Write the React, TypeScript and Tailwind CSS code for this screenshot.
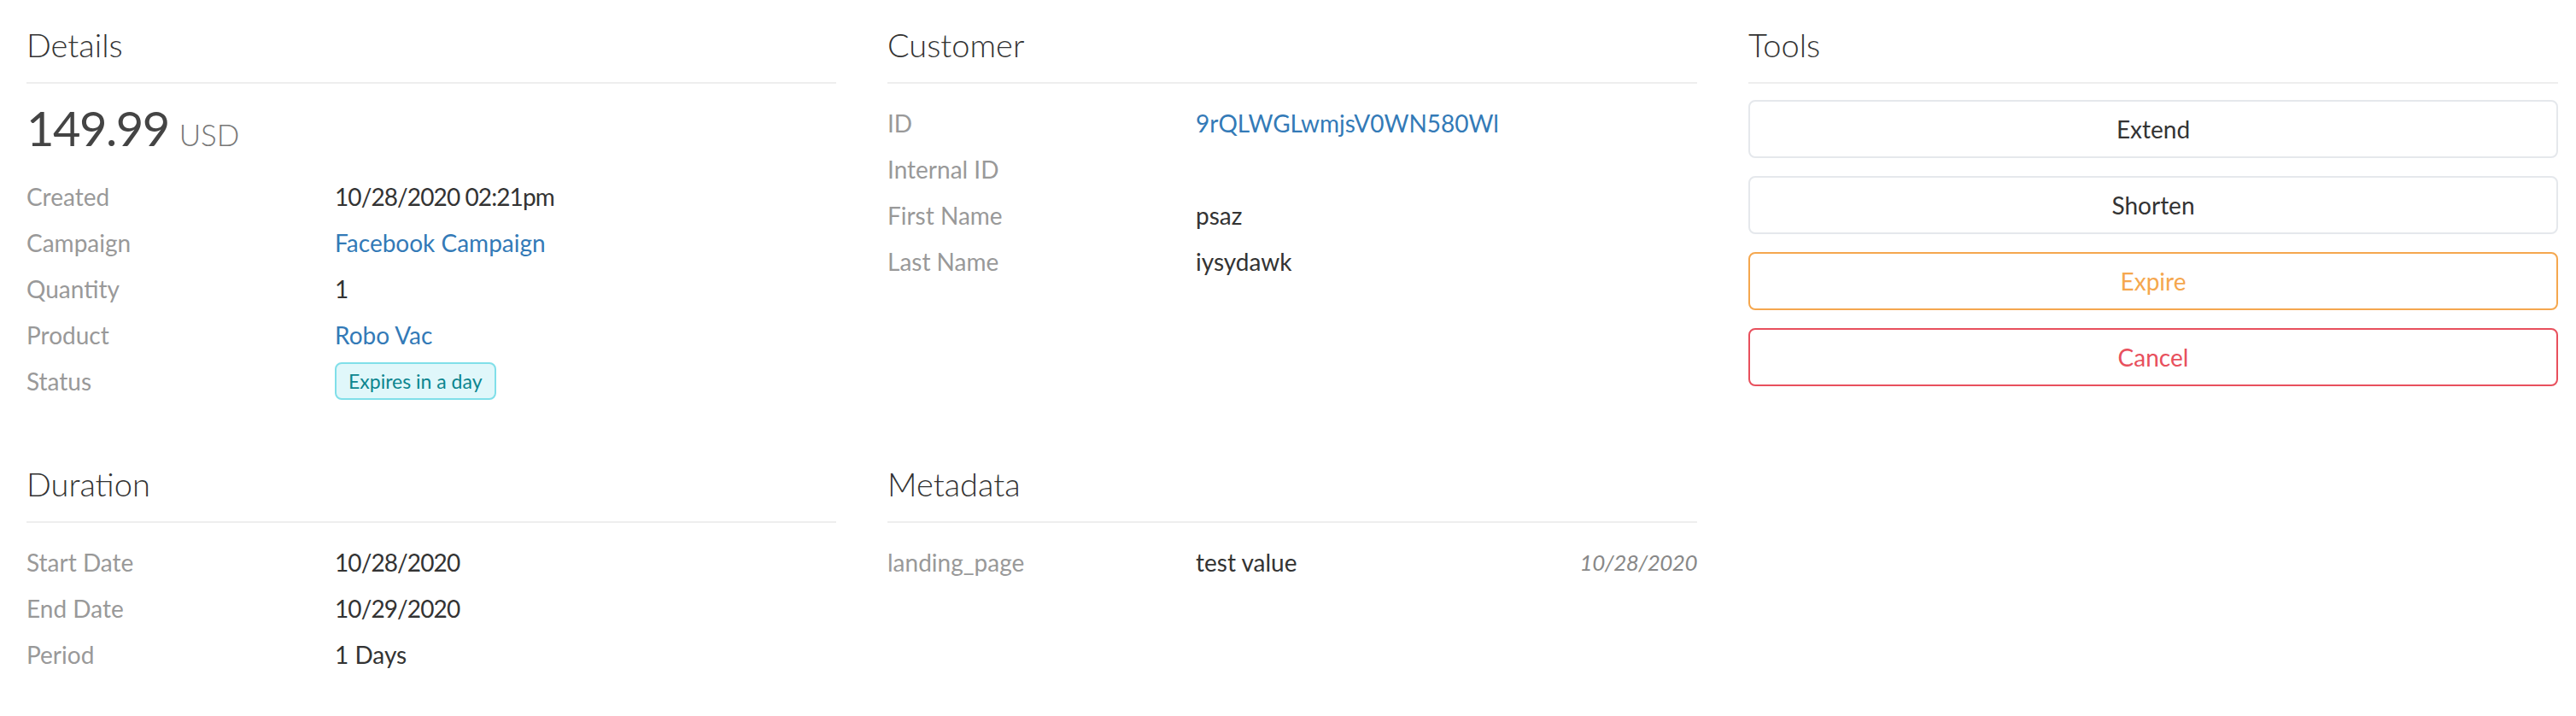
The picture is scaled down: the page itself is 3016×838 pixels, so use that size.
import React from "react";

const font = { fontFamily: "Lato, 'Noto Sans', sans-serif" };

function Heading({ children }: { children: React.ReactNode }) {
  return (
    <div className="text-[38px] leading-[48px] font-light text-[#333] pb-[20px] border-b-2 border-[#eeeeee]">
      {children}
    </div>
  );
}

function Row({ label, children }: { label: string; children: React.ReactNode }) {
  return (
    <div className="flex h-[54px] items-center text-[28px] leading-[54px]">
      <div className="w-[361px] shrink-0 text-[#999999]">{label}</div>
      <div className="flex-1 flex items-center text-[#333333]">{children}</div>
    </div>
  );
}

function Num({ children }: { children: React.ReactNode }) {
  return <span className="tracking-[-0.9px]">{children}</span>;
}

function Link({ children }: { children: React.ReactNode }) {
  return <span className="text-[#337ab7]">{children}</span>;
}

function ToolButton({ children, cls }: { children: React.ReactNode; cls: string }) {
  return (
    <button
      className={
        "w-full h-[68px] rounded-[8px] border-2 bg-white text-[28px] flex items-center justify-center " + cls
      }
    >
      {children}
    </button>
  );
}

export default function App() {
  return (
    <div className="w-[3016px] h-[838px] bg-white pt-[28px] pl-[31px] pr-[21px]" style={font}>
      <div className="grid grid-cols-3 gap-x-[60px] gap-y-[69px]">
        {/* Details */}
        <div>
          <Heading>Details</Heading>
          <div className="mt-[19px]">
            <div className="h-[66px] leading-[66px] mb-[20px] flex items-baseline">
              <span className="text-[56px] text-[#444444] tracking-[-1.5px]">149.99</span>
              <span className="text-[35px] font-light text-[#777777] ml-[12px]">USD</span>
            </div>
            <Row label="Created">
              <Num>10/28/2020 02:21pm</Num>
            </Row>
            <Row label="Campaign">
              <Link>Facebook Campaign</Link>
            </Row>
            <Row label="Quantity">1</Row>
            <Row label="Product">
              <Link>Robo Vac</Link>
            </Row>
            <Row label="Status">
              <span className="inline-flex items-center h-[44px] px-[14px] rounded-[8px] border-2 border-[#80dfe9] bg-[#e0f7fa] text-[#0b858f] text-[23px] leading-none">
                Expires in a day
              </span>
            </Row>
          </div>
        </div>

        {/* Customer */}
        <div>
          <Heading>Customer</Heading>
          <div className="mt-[19px]">
            <Row label="ID">
              <Link>9rQLWGLwmjsV0WN580Wl</Link>
            </Row>
            <Row label="Internal ID">{""}</Row>
            <Row label="First Name">psaz</Row>
            <Row label="Last Name">iysydawk</Row>
          </div>
        </div>

        {/* Tools */}
        <div>
          <Heading>Tools</Heading>
          <div className="mt-[19px] flex flex-col gap-[21px]">
            <ToolButton cls="border-[#e5e8ec] text-[#333333]">Extend</ToolButton>
            <ToolButton cls="border-[#e5e8ec] text-[#333333]">Shorten</ToolButton>
            <ToolButton cls="border-[#f5a74e] text-[#f5a74e]">Expire</ToolButton>
            <ToolButton cls="border-[#e8505d] text-[#e8505d]">Cancel</ToolButton>
          </div>
        </div>

        {/* Duration */}
        <div>
          <Heading>Duration</Heading>
          <div className="mt-[19px]">
            <Row label="Start Date">
              <Num>10/28/2020</Num>
            </Row>
            <Row label="End Date">
              <Num>10/29/2020</Num>
            </Row>
            <Row label="Period">1 Days</Row>
          </div>
        </div>

        {/* Metadata */}
        <div>
          <Heading>Metadata</Heading>
          <div className="mt-[19px]">
            <div className="flex h-[54px] items-center text-[28px] leading-[54px]">
              <div className="w-[361px] shrink-0 text-[#999999]">landing_page</div>
              <div className="flex-1 text-[#333333]">test value</div>
              <div className="text-[26px] italic text-[#888888] tracking-[-0.5px]">10/28/2020</div>
            </div>
          </div>
        </div>

        <div />
      </div>
    </div>
  );
}
